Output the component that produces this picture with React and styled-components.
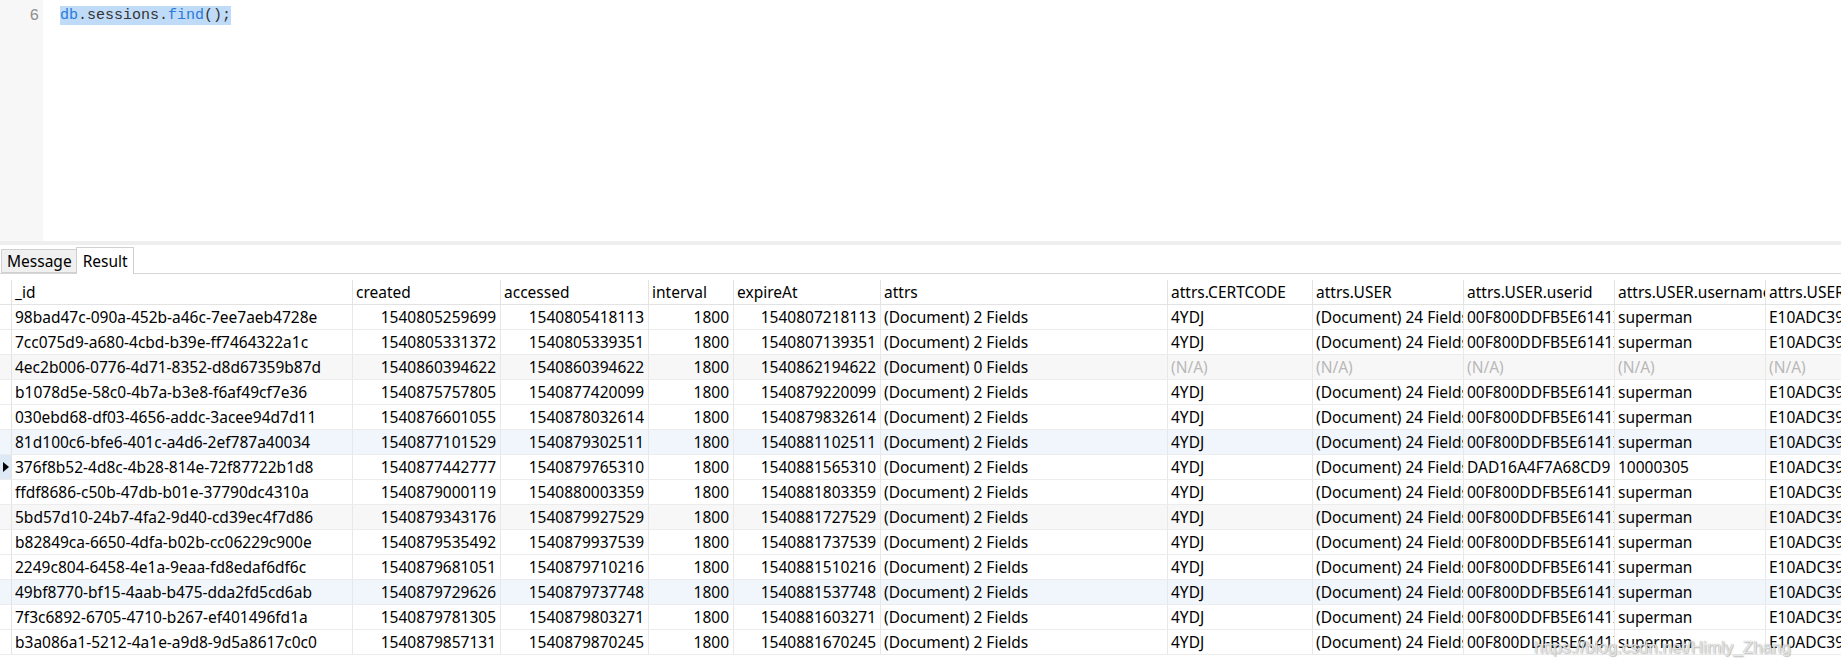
import styled, { createGlobalStyle } from "styled-components";

const GlobalStyle = createGlobalStyle`
  html, body {
    margin: 0;
    padding: 0;
    background: #ffffff;
    overflow: hidden;
  }
  body {
    font-family: "Noto Sans", "Open Sans", sans-serif;
  }
`;

const COLS = "12px 341px 148px 148px 85px 147px 287px 145px 151px 151px 151px 200px";

const headers = [
  "_id",
  "created",
  "accessed",
  "interval",
  "expireAt",
  "attrs",
  "attrs.CERTCODE",
  "attrs.USER",
  "attrs.USER.userid",
  "attrs.USER.username",
  "attrs.USER.userpwd",
];

const rows = [
  ["98bad47c-090a-452b-a46c-7ee7aeb4728e", "1540805259699", "1540805418113", "1540807218113", 2],
  ["7cc075d9-a680-4cbd-b39e-ff7464322a1c", "1540805331372", "1540805339351", "1540807139351", 2],
  ["4ec2b006-0776-4d71-8352-d8d67359b87d", "1540860394622", "1540860394622", "1540862194622", 0],
  ["b1078d5e-58c0-4b7a-b3e8-f6af49cf7e36", "1540875757805", "1540877420099", "1540879220099", 2],
  ["030ebd68-df03-4656-addc-3acee94d7d11", "1540876601055", "1540878032614", "1540879832614", 2],
  ["81d100c6-bfe6-401c-a4d6-2ef787a40034", "1540877101529", "1540879302511", "1540881102511", 2],
  ["376f8b52-4d8c-4b28-814e-72f87722b1d8", "1540877442777", "1540879765310", "1540881565310", 2],
  ["ffdf8686-c50b-47db-b01e-37790dc4310a", "1540879000119", "1540880003359", "1540881803359", 2],
  ["5bd57d10-24b7-4fa2-9d40-cd39ec4f7d86", "1540879343176", "1540879927529", "1540881727529", 2],
  ["b82849ca-6650-4dfa-b02b-cc06229c900e", "1540879535492", "1540879937539", "1540881737539", 2],
  ["2249c804-6458-4e1a-9eaa-fd8edaf6df6c", "1540879681051", "1540879710216", "1540881510216", 2],
  ["49bf8770-bf15-4aab-b475-dda2fd5cd6ab", "1540879729626", "1540879737748", "1540881537748", 2],
  ["7f3c6892-6705-4710-b267-ef401496fd1a", "1540879781305", "1540879803271", "1540881603271", 2],
  ["b3a086a1-5212-4a1e-a9d8-9d5a8617c0c0", "1540879857131", "1540879870245", "1540881670245", 2],
];

const CURRENT = 6;

function rowTint(i) {
  if (i % 6 === 2) return "#f7f7f7";
  if (i % 6 === 5) return "#f1f6fc";
  return "#ffffff";
}

export default function App() {
  return (
    <Page>
      <GlobalStyle />
      <Editor>
        <Gutter>
          <LineNo>5</LineNo>
          <LineNo>6</LineNo>
        </Gutter>
        <Code>
          <CodeLine />
          <CodeLine>
            <Selected>
              <Ident>db</Ident>.sessions.<Ident>find</Ident>();
            </Selected>
          </CodeLine>
        </Code>
      </Editor>
      <Splitter />
      <TabBar>
        <Tab>Message</Tab>
        <Tab $active>Result</Tab>
      </TabBar>
      <GridArea>
        <HeaderRow>
          <Indicator />
          {headers.map((h) => (
            <HeadCell key={h}>{h}</HeadCell>
          ))}
        </HeaderRow>
        {rows.map((r, i) => {
          const empty = r[4] === 0;
          const special = i === CURRENT;
          return (
            <DataRow key={r[0]} $bg={rowTint(i)}>
              <Indicator $current={special}>{special && <Arrow />}</Indicator>
              <Cell>{r[0]}</Cell>
              <Cell $num>{r[1]}</Cell>
              <Cell $num>{r[2]}</Cell>
              <Cell $num>1800</Cell>
              <Cell $num>{r[3]}</Cell>
              <Cell>(Document) {r[4]} Fields</Cell>
              {empty ? (
                <>
                  <Cell $na>(N/A)</Cell>
                  <Cell $na>(N/A)</Cell>
                  <Cell $na>(N/A)</Cell>
                  <Cell $na>(N/A)</Cell>
                  <Cell $na>(N/A)</Cell>
                </>
              ) : (
                <>
                  <Cell>4YDJ</Cell>
                  <Cell>(Document) 24 Fields</Cell>
                  <Cell>{special ? "DAD16A4F7A68CD9 5B2E0" : "00F800DDFB5E6141IE2A9"}</Cell>
                  <Cell>{special ? "10000305" : "superman"}</Cell>
                  <Cell>E10ADC3949BA59ABBE56E057F20F883E</Cell>
                </>
              )}
            </DataRow>
          );
        })}
        <Watermark>https://blog.csdn.net/Himly_Zhang</Watermark>
      </GridArea>
    </Page>
  );
}

const Page = styled.div`
  width: 1841px;
  height: 668px;
  display: flex;
  flex-direction: column;
  overflow: hidden;
  background: #ffffff;
`;

const Editor = styled.div`
  height: 241px;
  display: flex;
  overflow: hidden;
  flex-shrink: 0;
`;

const Gutter = styled.div`
  width: 43px;
  background: #f7f7f7;
  padding-right: 4px;
  box-sizing: border-box;
  display: flex;
  flex-direction: column;
  align-items: flex-end;
`;

const LineNo = styled.div`
  height: 20px;
  line-height: 20px;
  font-family: "Liberation Mono", monospace;
  font-size: 16px;
  color: #8f8f8f;
  &:first-child {
    margin-top: -14px;
  }
`;

const Code = styled.div`
  flex: 1;
  padding-left: 17px;
  font-family: "Liberation Mono", monospace;
  font-size: 15px;
  color: #333333;
`;

const CodeLine = styled.div`
  height: 20px;
  line-height: 20px;
  white-space: pre;
  &:first-child {
    margin-top: -14px;
  }
`;

const Selected = styled.span`
  display: inline-block;
  background: #bfdbf7;
  line-height: 19px;
  height: 19px;
`;

const Ident = styled.span`
  color: #2a7ad8;
`;

const Splitter = styled.div`
  height: 4px;
  background: #eeeeee;
  flex-shrink: 0;
`;

const TabBar = styled.div`
  height: 28px;
  flex-shrink: 0;
  display: flex;
  align-items: flex-end;
  padding-left: 1px;
  border-bottom: 1px solid #d6d6d6;
`;

const Tab = styled.div`
  height: ${(p) => (p.$active ? "27px" : "24px")};
  margin-bottom: ${(p) => (p.$active ? "-1px" : "0")};
  padding: 0 ${(p) => (p.$active ? "5px" : "4px")} 0 ${(p) => (p.$active ? "6px" : "5px")};
  box-sizing: border-box;
  display: flex;
  align-items: center;
  font-size: 15.5px;
  color: #000000;
  background: ${(p) => (p.$active ? "#ffffff" : "#f0f0f0")};
  border: 1px solid #d0d0d0;
  border-bottom: ${(p) => (p.$active ? "none" : "1px solid #d0d0d0")};
  border-right: ${(p) => (p.$active ? "1px solid #d0d0d0" : "none")};
`;

const GridArea = styled.div`
  position: relative;
  flex: 1;
  padding-top: 6px;
  overflow: hidden;
`;

const HeaderRow = styled.div`
  display: grid;
  grid-template-columns: ${COLS};
  height: 25px;
  border-bottom: 1px solid #e3e3e3;
  box-sizing: border-box;
`;

const DataRow = styled(HeaderRow)`
  background: ${(p) => p.$bg};
  border-bottom: 1px solid #ececec;
`;

const Indicator = styled.div`
  border-right: 1px solid #e3e3e3;
  background: ${(p) => (p.$current ? "#dde9f5" : "transparent")};
  display: flex;
  align-items: center;
  padding-left: 3px;
`;

const Arrow = styled.div`
  width: 0;
  height: 0;
  border-top: 5px solid transparent;
  border-bottom: 5px solid transparent;
  border-left: 6px solid #000000;
`;

const HeadCell = styled.div`
  border-right: 1px solid #e3e3e3;
  padding: 0 3px;
  font-size: 15.5px;
  line-height: 24px;
  color: #000000;
  white-space: nowrap;
  overflow: hidden;
`;

const Cell = styled.div`
  border-right: 1px solid #e8e8e8;
  padding: 0 4px 0 3px;
  font-size: 15.5px;
  line-height: 24px;
  color: ${(p) => (p.$na ? "#b8b8b8" : "#000000")};
  text-align: ${(p) => (p.$num ? "right" : "left")};
  white-space: nowrap;
  overflow: hidden;
`;

const Watermark = styled.div`
  position: absolute;
  right: 50px;
  bottom: 10px;
  font-family: "Liberation Sans", Arial, sans-serif;
  font-size: 17px;
  color: rgba(255, 255, 255, 0.75);
  text-shadow: 0 0 1px rgba(120, 120, 120, 0.8), 1px 1px 1px rgba(150, 150, 150, 0.5);
  pointer-events: none;
`;
